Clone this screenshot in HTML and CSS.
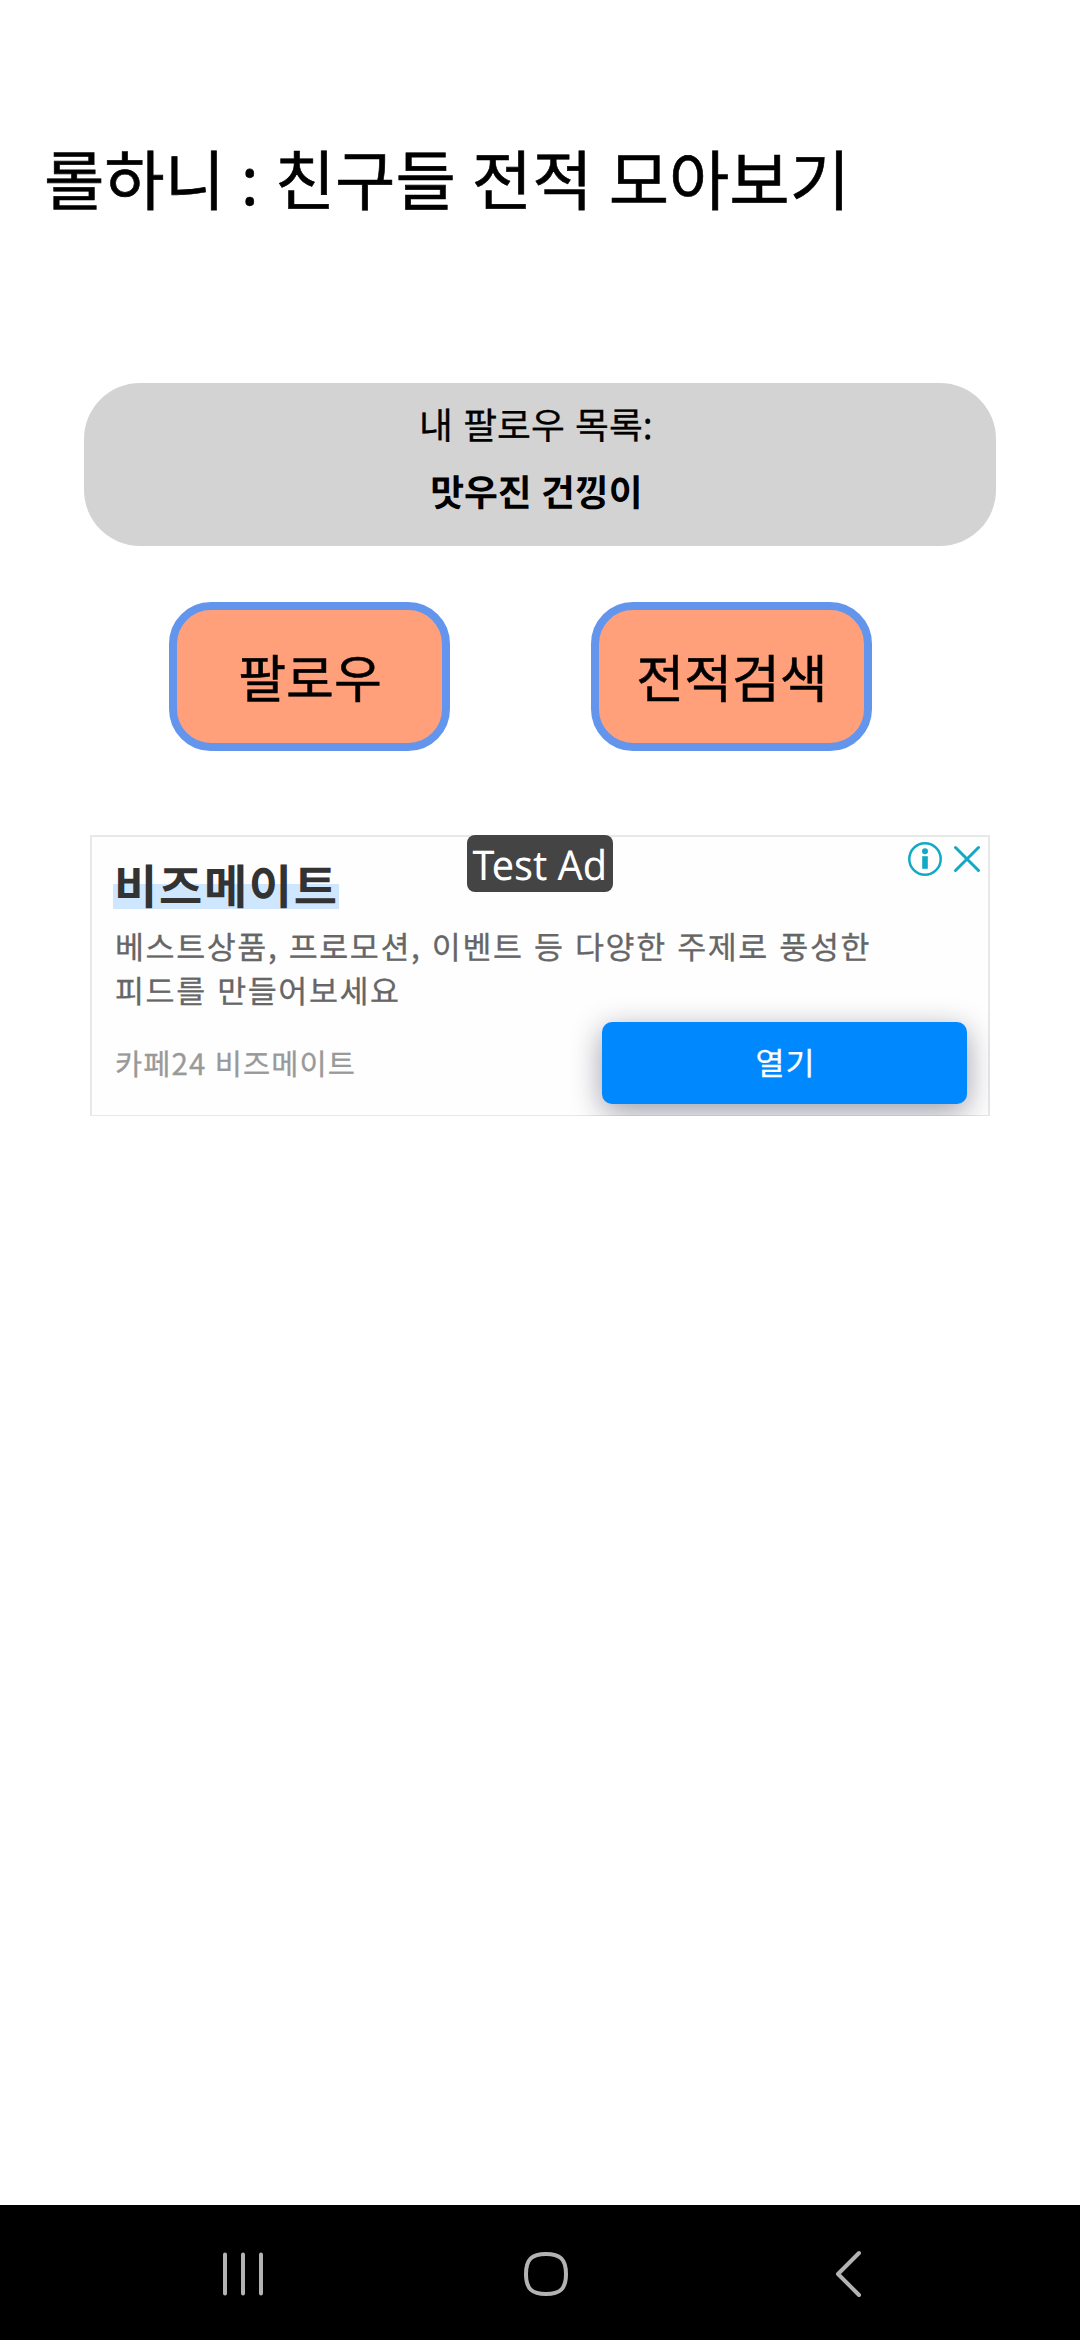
FILE: index.html
```html
<!DOCTYPE html>
<html lang="ko">
<head>
<meta charset="utf-8">
<title>롤하니</title>
<link rel="stylesheet" href="styles.css">
</head>
<body>
<div class="app">
  <main class="content">
    <h1 class="title">롤하니 <span class="colon">:</span> 친구들 전적 모아보기</h1>
    <section class="follow-card">
      <p class="follow-label">내 팔로우 목록<span class="colon">:</span>&nbsp;</p>
      <p class="follow-name">맛우진 건낑이&nbsp;</p>
    </section>
    <div class="actions">
      <button class="action">팔로우</button>
      <button class="action">전적검색</button>
    </div>
    <section class="ad">
      <h2 class="ad-title"><span class="ad-mark">비즈메이트</span></h2>
      <p class="ad-body">베스트상품, 프로모션, 이벤트 등 다양한 주제로 풍성한<br>피드를 만들어보세요</p>
      <div class="ad-footer">
        <span class="ad-source">카페24 비즈메이트</span>
        <button class="ad-open">열기</button>
      </div>
      <span class="ad-badge"><span class="ad-badge-text">Test Ad</span></span>
      <svg class="ad-icons" width="74" height="36" viewBox="0 0 74 36" fill="none" stroke="#12a9c6">
        <circle cx="18" cy="18" r="15.7" stroke-width="2.5"/>
        <circle cx="18" cy="10.3" r="3" fill="#12a9c6" stroke="none"/>
        <path d="M15.2 15.2h5.6v12.6h-5.6z" fill="#12a9c6" stroke="none"/>
        <path d="M48.5 6.5l23 23M71.5 6.5l-23 23" stroke-width="3" stroke-linecap="round"/>
      </svg>
    </section>
  </main>
  <nav class="navbar">
    <svg class="nav-icon" viewBox="0 0 48 48"><path d="M6 4.5v39M24 4.5v39M42 4.5v39"/></svg>
    <svg class="nav-icon" viewBox="0 0 48 48"><path d="M24 4C38 4 44 9 44 24S38 44 24 44 4 39 4 24 10 4 24 4z"/></svg>
    <svg class="nav-icon" viewBox="0 0 48 48"><path d="M34 3L13 24l21 21"/></svg>
  </nav>
</div>
</body>
</html>
```
FILE: styles.css
```css
* { box-sizing: border-box; margin: 0; padding: 0; }
body { background: #fff; color: #000; font-family: "Noto Sans CJK KR", sans-serif; text-rendering: geometricPrecision; }
button { font-family: inherit; color: inherit; text-rendering: inherit; }
.app { display: flex; flex-direction: column; width: 1080px; height: 2340px; }
.content { flex: 1; padding-top: 127px; }
.title { margin-left: 44px; font-size: 65.6px; line-height: 100px; font-weight: 400; white-space: nowrap; word-spacing: -2.3px; -webkit-text-stroke: 0.6px #000; }
.colon { font-family: "Noto Sans", sans-serif; line-height: 1; }
.follow-card { margin: 156px 84px 0; height: 163px; padding-top: 7px; border-radius: 56px; background: #d3d3d3; text-align: center; }
.follow-label, .follow-name { padding-left: 2px; font-size: 36.8px; line-height: 67px; }
.follow-label { -webkit-text-stroke: 0.3px #000; }
.follow-name { font-weight: 700; word-spacing: -1px; }
.actions { display: flex; gap: 141px; margin: 56px 0 0 169px; }
.action { width: 281px; height: 149px; border: 8px solid #6495ed; border-radius: 42px; background: #ffa07a; font-size: 52px; line-height: 72px; white-space: nowrap; padding: 0 0 2px 1px; -webkit-text-stroke: 0.5px #000; }
.ad { position: relative; width: 900px; height: 281px; margin: 84px 0 0 90px; padding: 16px 21px 0; border: 2px solid #e7e8e8; border-bottom-width: 1px; background: #fefefe; clip-path: inset(0); }
.ad-title { font-size: 47px; line-height: 64px; font-weight: 700; letter-spacing: 1.7px; color: #333; }
.ad-mark { display: inline-block; height: 56px; padding-left: 1px; line-height: 61px; background: linear-gradient(transparent 31px, #cfe6ff 31px); vertical-align: top; }
.ad-body { margin: 7px 0 0 2px; font-size: 31.5px; line-height: 44px; letter-spacing: 1.6px; color: #666; white-space: nowrap; -webkit-text-stroke: 0.3px #666; }
.ad-footer { display: flex; justify-content: space-between; margin-top: 10px; padding-left: 2px; }
.ad-source { font-size: 29.5px; line-height: 82px; letter-spacing: 1.1px; word-spacing: -1px; color: #999; -webkit-text-stroke: 0.3px #999; }
.ad-open { width: 365px; height: 82px; border: 0; border-radius: 10px; background: #0088ff; color: #fff; font-size: 31.5px; padding: 0 0 2px 2px; letter-spacing: 1px; -webkit-text-stroke: 0.3px #fff; box-shadow: 0 8px 30px rgba(20, 20, 50, 0.42); }
.ad-badge { position: absolute; left: 375px; top: -2px; width: 146px; height: 57px; border-radius: 8px; background: #444; color: #fff; display: flex; justify-content: center; }
.ad-badge-text { font: 41px/60px "Noto Sans", sans-serif; white-space: nowrap; transform: scaleX(0.965); }
.ad-icons { position: absolute; right: 7px; top: 4px; }
.navbar { display: flex; height: 135px; padding: 45px 207px 0 219px; justify-content: space-between; background: #000; }
.nav-icon { width: 48px; height: 48px; fill: none; stroke: #b3b3b3; stroke-width: 4; stroke-linecap: round; stroke-linejoin: round; }
```
